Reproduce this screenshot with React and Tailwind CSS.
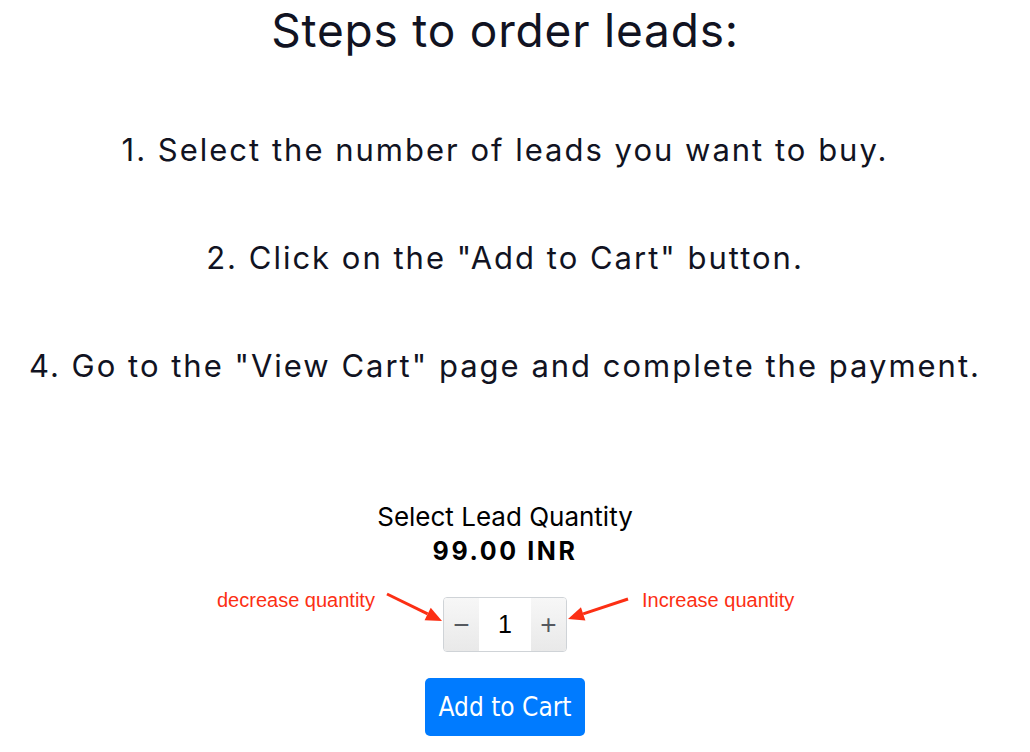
import React, { useState } from "react";

const Arrow = ({ x1, y1, x2, y2 }) => {
  // red annotation arrow, head at x2,y2
  const ang = Math.atan2(y2 - y1, x2 - x1);
  const len = 16;
  const w = 7;
  const bx = x2 - len * Math.cos(ang);
  const by = y2 - len * Math.sin(ang);
  const px = -Math.sin(ang) * w;
  const py = Math.cos(ang) * w;
  return (
    <g>
      <line x1={x1} y1={y1} x2={bx} y2={by} stroke="#fc2f14" strokeWidth="3" />
      <polygon points={`${x2},${y2} ${bx + px},${by + py} ${bx - px},${by - py}`} fill="#fc2f14" />
    </g>
  );
};

export default function App() {
  const [qty, setQty] = useState(1);

  return (
    <div className="w-[1010px] h-[752px] bg-white overflow-hidden flex flex-col items-center" style={{ fontFamily: "Inter, 'Noto Sans', sans-serif" }}>
      <h1 className="text-[46px] leading-[60px] text-[#111322] tracking-[0.8px]">Steps to order leads:</h1>

      <div className="mt-[74px] flex flex-col items-center gap-[76px] text-[31px] leading-[32px] text-[#111322] tracking-[2px]">
        <p>1. Select the number of leads you want to buy.</p>
        <p>2. Click on the "Add to Cart" button.</p>
        <p>4. Go to the "View Cart" page and complete the payment.</p>
      </div>

      <div className="mt-[118px] flex flex-col items-center text-black">
        <p className="text-[26px] leading-[34px]">Select Lead Quantity</p>
        <p className="text-[25px] leading-[34px] font-bold tracking-[2.6px]">99.00 INR</p>
      </div>

      <div className="relative mt-[29px] w-[1010px] flex justify-center">
        <div className="flex h-[55px] border border-[#cfd3d7] rounded-[4px] overflow-hidden" style={{ fontFamily: "'Liberation Sans', Arial, sans-serif" }}>
          <button
            onClick={() => setQty(q => Math.max(1, q - 1))}
            className="w-[35px] bg-gradient-to-b from-[#f7f7f7] to-[#e9e9e9] text-[#55595f] text-[28px] flex items-center justify-center"
          >
            −
          </button>
          <div className="w-[52px] bg-white flex items-center justify-center text-[25px] text-black">{qty}</div>
          <button
            onClick={() => setQty(q => q + 1)}
            className="w-[35px] bg-gradient-to-b from-[#f7f7f7] to-[#e9e9e9] text-[#55595f] text-[28px] flex items-center justify-center"
          >
            +
          </button>
        </div>

        <span className="absolute left-[217px] top-[-9px] text-[20px] leading-[24px] text-[#fc2f14]" style={{ fontFamily: "'Liberation Sans', Arial, sans-serif" }}>
          decrease quantity
        </span>
        <span className="absolute left-[642px] top-[-9px] text-[20px] leading-[24px] text-[#fc2f14]" style={{ fontFamily: "'Liberation Sans', Arial, sans-serif" }}>
          Increase quantity
        </span>
        <svg className="absolute left-0 top-0 pointer-events-none overflow-visible" width="1010" height="60">
          <Arrow x1={387} y1={-3} x2={442} y2={24} />
          <Arrow x1={628} y1={2} x2={568} y2={22} />
        </svg>
      </div>

      <button
        className="mt-[26px] w-[160px] h-[58px] bg-[#007bff] rounded-[5px] text-white text-[26px]"
        style={{ fontFamily: "'DejaVu Sans Condensed', 'DejaVu Sans', sans-serif" }}
      >
        Add to Cart
      </button>
    </div>
  );
}
